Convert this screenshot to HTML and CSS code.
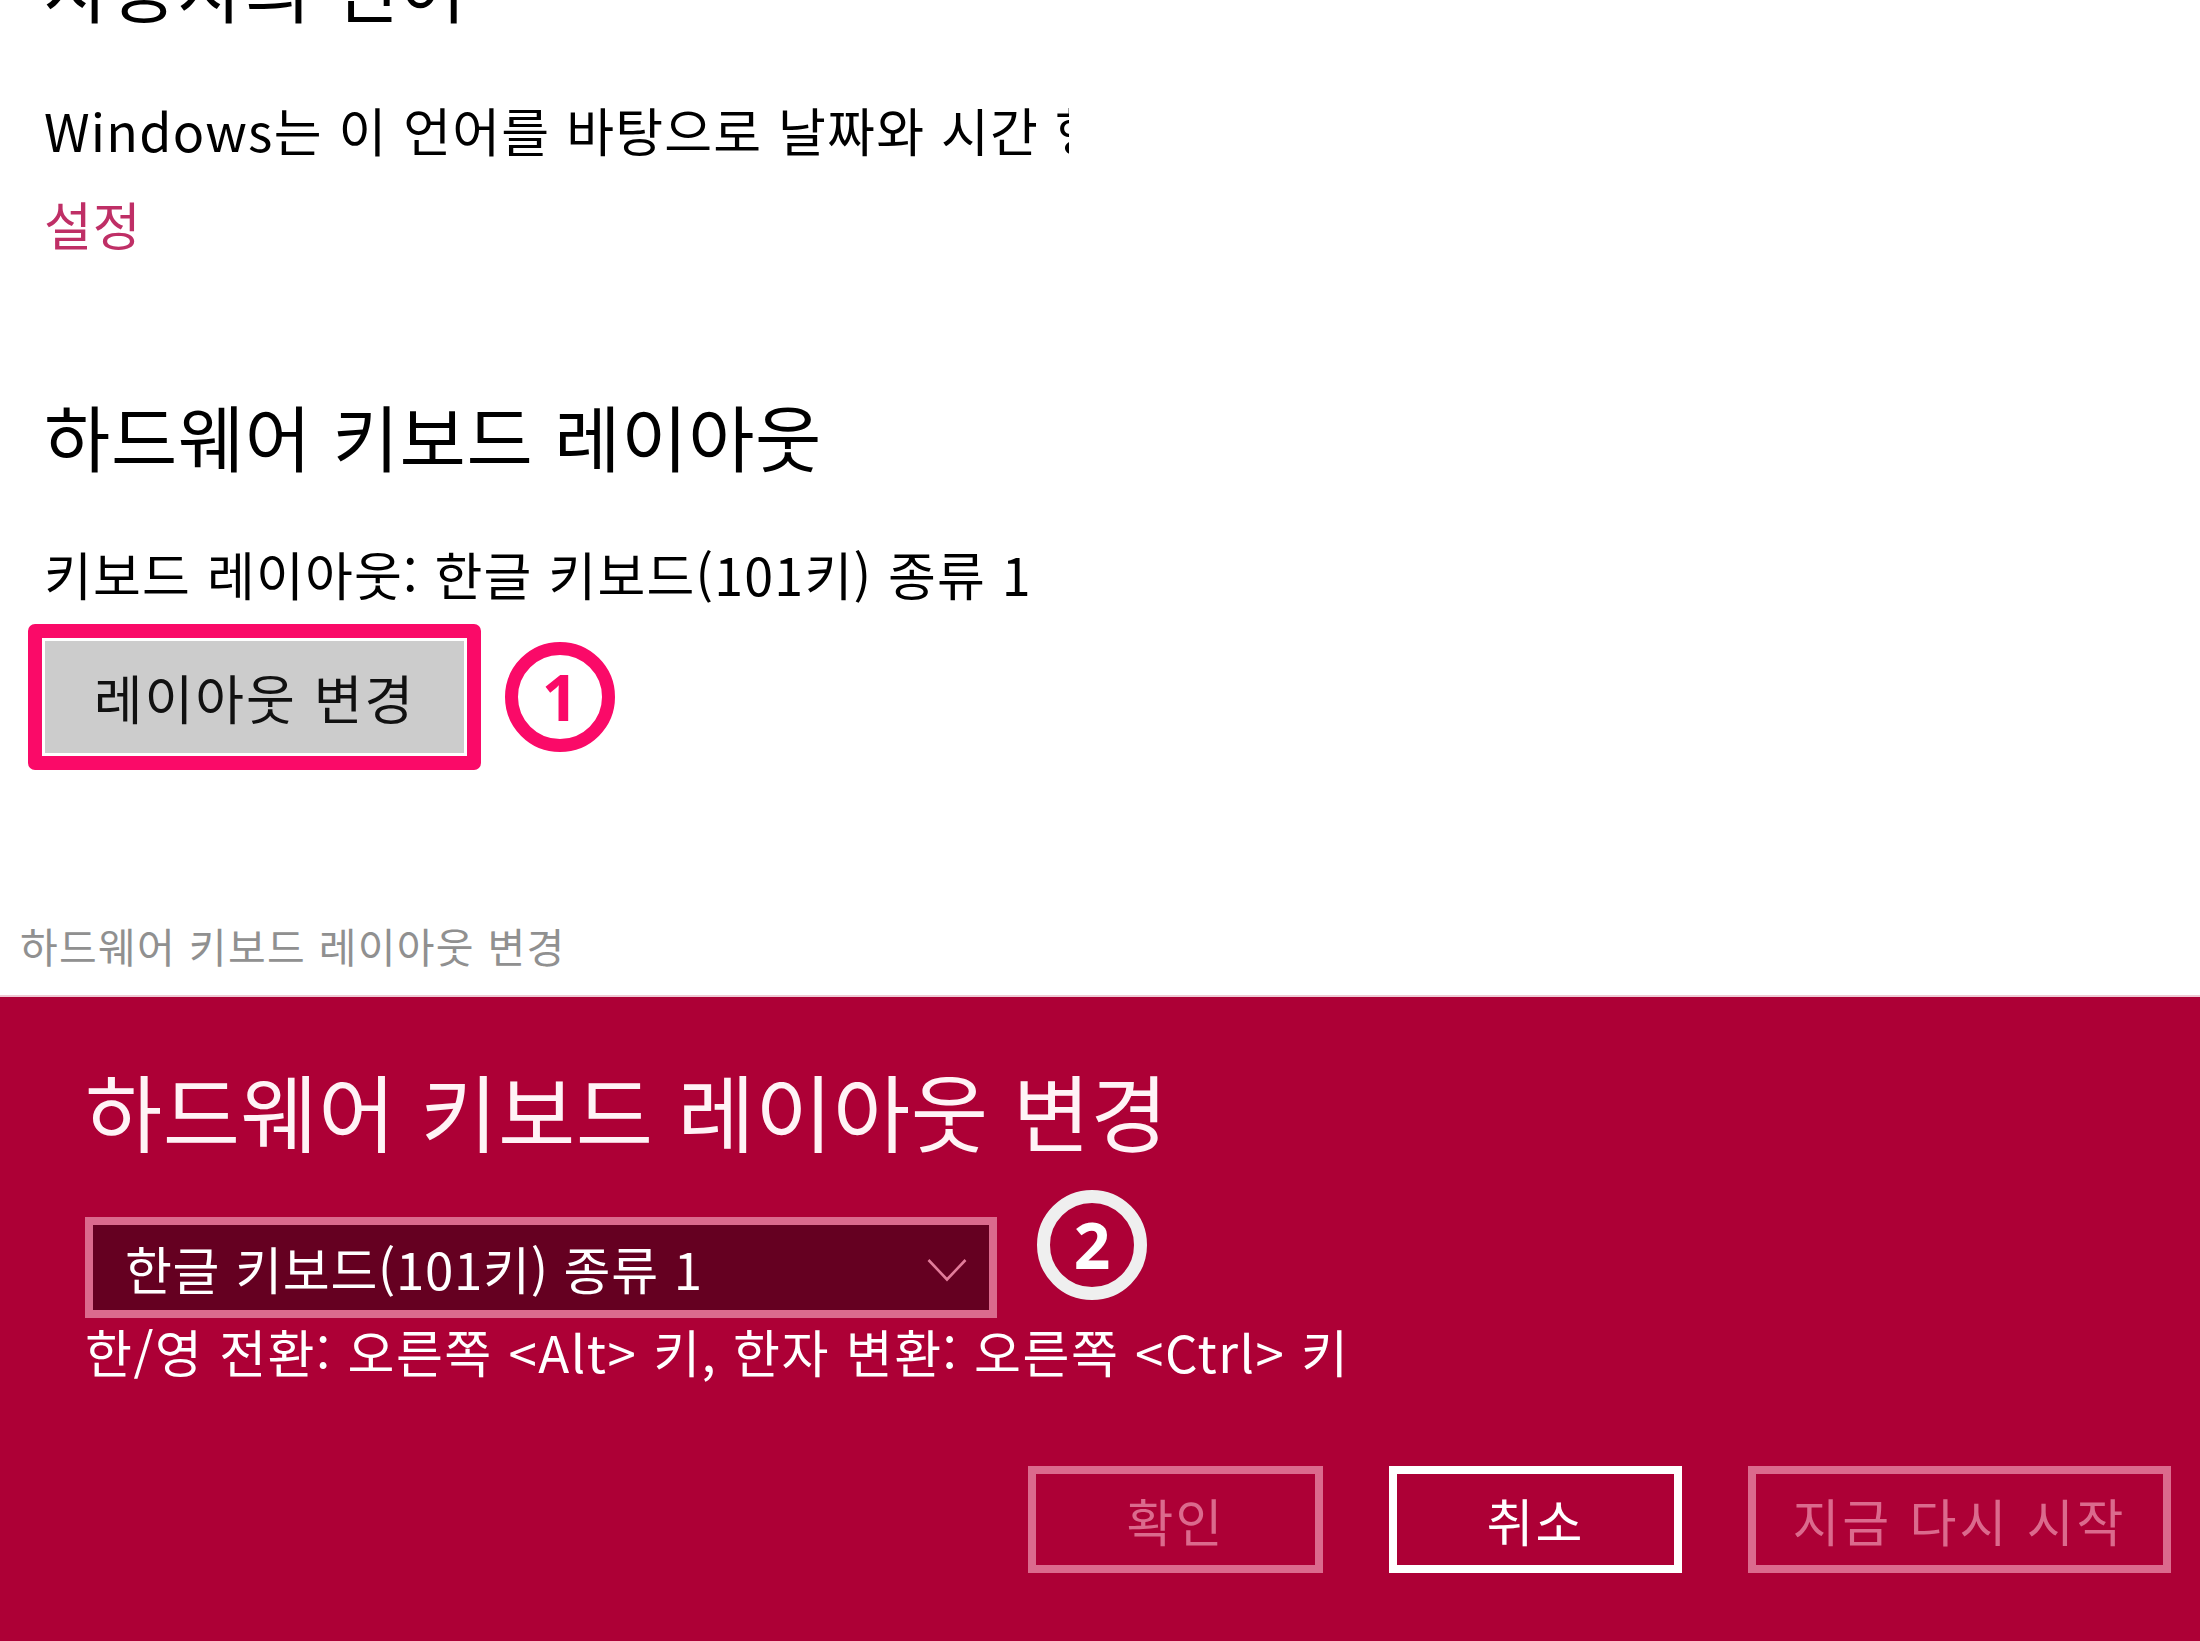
FILE: index.html
```html
<!DOCTYPE html>
<html lang="ko">
<head>
<meta charset="utf-8">
<title>하드웨어 키보드 레이아웃 변경</title>
<link rel="stylesheet" href="styles.css">
</head>
<body>
<div class="settings">
  <h2 class="section-title cut">사용자의 언어</h2>
  <p class="text clip">Windows는 이 언어를 바탕으로 날짜와 시간 형식을 지정합니다.</p>
  <a class="link">설정</a>
  <h2 class="section-title hw">하드웨어 키보드 레이아웃</h2>
  <p class="text layout-line">키보드 레이아웃: 한글 키보드(101키) 종류 1</p>
  <div class="btn-row">
    <div class="highlight"><div class="gray-btn">레이아웃 변경</div></div>
    <span class="marker marker-pink">1</span>
  </div>
</div>
<div class="caption">하드웨어 키보드 레이아웃 변경</div>
<section class="dialog">
  <h1 class="dialog-title">하드웨어 키보드 레이아웃 변경</h1>
  <div class="select-row">
    <div class="select">
      <span class="select-text">한글 키보드(101키) 종류 1</span>
      <svg class="chevron" width="40" height="24" viewBox="0 0 40 24"><polyline points="1.5,2 20,21.5 38.5,2" fill="none" stroke="#e27c9a" stroke-width="2.6"/></svg>
    </div>
    <span class="marker marker-white">2</span>
  </div>
  <p class="dialog-desc">한/영 전환: 오른쪽 &lt;Alt&gt; 키, 한자 변환: 오른쪽 &lt;Ctrl&gt; 키</p>
  <div class="actions">
    <div class="act act-ok">확인</div>
    <div class="act act-cancel">취소</div>
    <div class="act act-restart">지금 다시 시작</div>
  </div>
</section>
</body>
</html>
```
FILE: styles.css
```css
html, body {
  margin: 0;
  padding: 0;
  background: #ffffff;
}
body {
  width: 2200px;
  min-height: 1641px;
  display: flex;
  flex-direction: column;
  overflow: hidden;
  font-family: "Noto Sans CJK KR", "Noto Sans", sans-serif;
  color: #000;
}
.settings {
  width: 1025px;
  padding-left: 44px;
  overflow: hidden;
  display: flex;
  flex-direction: column;
  align-items: flex-start;
}
.section-title {
  margin: 0;
  font-size: 72px;
  line-height: 90px;
  font-weight: 400;
  letter-spacing: 0.7px;
  white-space: nowrap;
}
.section-title.cut {
  margin-top: -59px;
}
.text {
  margin: 0;
  font-size: 52px;
  line-height: 70px;
  letter-spacing: 1.2px;
  white-space: nowrap;
}
.clip {
  margin-top: 64px;
}
.link {
  display: block;
  margin-top: 24px;
  font-size: 52px;
  line-height: 70px;
  letter-spacing: 1px;
  color: #bf2f66;
}
.hw {
  margin-top: 131px;
}
.layout-line {
  margin-top: 59px;
}
.btn-row {
  margin-top: 15px;
  display: flex;
  align-items: center;
  gap: 24px;
  margin-left: -16px;
}
.highlight {
  box-sizing: border-box;
  width: 453px;
  height: 146px;
  border: 14px solid #fa0a68;
  border-radius: 7px;
  padding: 3px;
  background: #fff;
}
.gray-btn {
  height: 100%;
  background: #cccccc;
  display: flex;
  align-items: center;
  justify-content: center;
  font-size: 53px;
  letter-spacing: 2px;
  color: #111;
}
.marker {
  box-sizing: border-box;
  width: 110px;
  height: 110px;
  border-radius: 50%;
  border: 13px solid;
  display: flex;
  align-items: center;
  justify-content: center;
  font-family: "Open Sans", "Noto Sans", sans-serif;
  font-weight: 700;
  font-size: 64px;
  line-height: 1;
  flex: none;
}
.marker-pink {
  border-color: #fa0a68;
  color: #fa0a68;
}
.marker-white {
  border-color: #efefef;
  color: #ffffff;
  margin-top: -27px;
}
.caption {
  margin-top: 147px;
  padding-left: 20px;
  font-size: 41px;
  line-height: 56px;
  color: #909090;
  letter-spacing: 1.3px;
}
.dialog {
  margin-top: 24px;
  flex: 1;
  background: #ad0036;
  padding: 58px 29px 0 85px;
  color: #fff;
  box-shadow: 0 -2px 0 #f0c8d4;
}
.dialog-title {
  margin: 0;
  font-size: 84px;
  line-height: 110px;
  font-weight: 400;
  letter-spacing: 0.5px;
  color: #fff3f6;
  white-space: nowrap;
}
.select-row {
  margin-top: 52px;
  display: flex;
  align-items: flex-start;
  gap: 40px;
}
.select {
  box-sizing: border-box;
  width: 912px;
  height: 101px;
  border: 8px solid #db6a8d;
  background: #650021;
  display: flex;
  align-items: center;
  justify-content: space-between;
  padding: 0 22px 0 32px;
}
.select-text {
  font-size: 51px;
  letter-spacing: 0.7px;
  color: #fff;
  white-space: nowrap;
}
.chevron {
  display: block;
  margin-top: 4px;
}
.dialog-desc {
  margin: 0;
  font-size: 51px;
  line-height: 66px;
  letter-spacing: 1.5px;
  color: #fff;
  white-space: nowrap;
}
.actions {
  margin-top: 82px;
  display: flex;
  justify-content: flex-end;
  gap: 66px;
}
.act {
  box-sizing: border-box;
  height: 107px;
  border: 8px solid #db6a8d;
  color: #db6a8d;
  display: flex;
  align-items: center;
  justify-content: center;
  font-size: 51px;
  letter-spacing: 2px;
}
.act-ok { width: 295px; }
.act-cancel {
  width: 293px;
  border-color: #ffffff;
  color: #ffffff;
}
.act-restart {
  width: 423px;
  letter-spacing: 3px;
}
```
